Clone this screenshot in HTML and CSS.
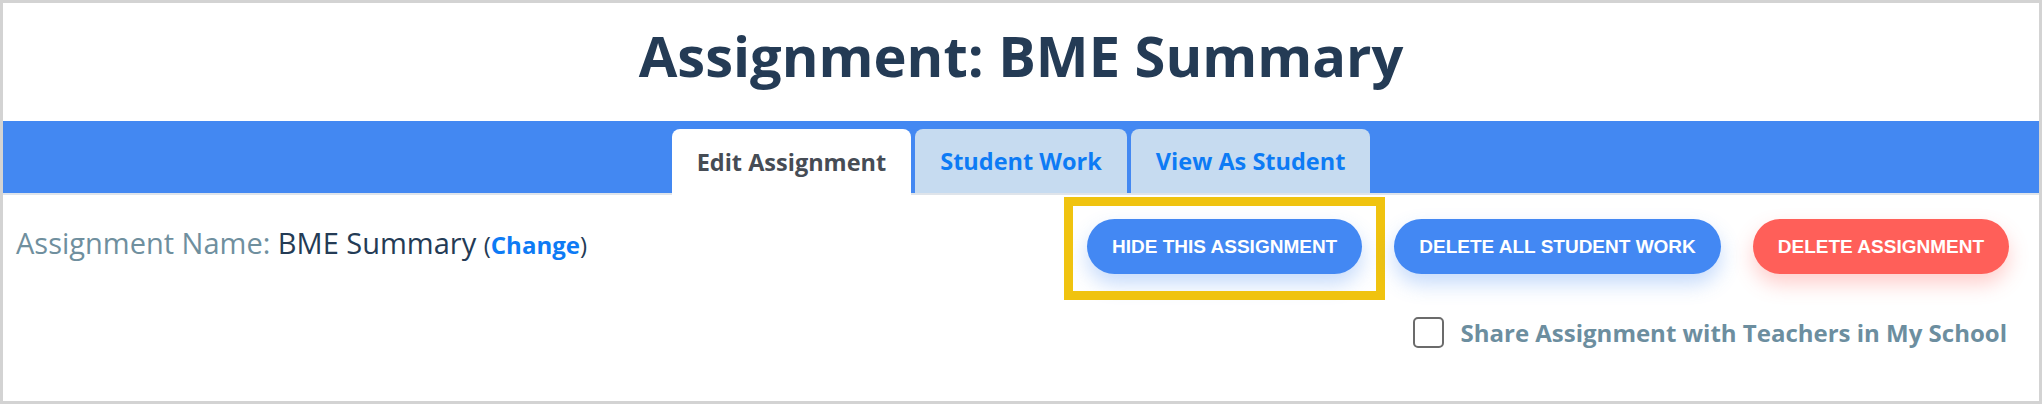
FILE: index.html
```html
<!DOCTYPE html>
<html lang="en">
<head>
    <meta charset="UTF-8">
    <meta name="viewport" content="width=device-width, initial-scale=1.0">
    <title>Assignment: BME Summary</title>
    <link rel="stylesheet" href="styles.css">
</head>
<body>
    <div class="page">
        <header class="page-header">
            <h1>Assignment: BME Summary</h1>
        </header>

        <nav class="tabs">
            <a class="tab active" href="#">Edit Assignment</a>
            <a class="tab" href="#">Student Work</a>
            <a class="tab" href="#">View As Student</a>
        </nav>

        <main class="content">
            <div class="top-row">
                <div class="assignment-name">
                    <span class="label">Assignment Name:</span> BME Summary
                    <span class="change">(<a href="#">Change</a>)</span>
                </div>
                <div class="actions">
                    <button class="btn btn-blue highlighted">Hide This Assignment</button>
                    <button class="btn btn-blue">Delete All Student Work</button>
                    <button class="btn btn-red">Delete Assignment</button>
                </div>
            </div>

            <label class="share">
                <input type="checkbox" id="share">
                <span class="box"></span>
                Share Assignment with Teachers in My School
            </label>
        </main>
    </div>
</body>
</html>
```

FILE: styles.css
```css
body {
    margin: 0;
    font-family: "Open Sans", Arial, sans-serif;
}
.page {
    height: 404px;
    box-sizing: border-box;
    border: 3px solid #d3d3d3;
    background-color: white;
}
.page-header {
    padding: 24px 0 38px;
    text-align: center;
}
h1 {
    margin: 0;
    font-size: 56px;
    line-height: 56px;
    font-weight: 700;
    color: #243b55;
}
.tabs {
    display: flex;
    justify-content: center;
    gap: 4px;
    height: 74px;
    box-sizing: border-box;
    padding-top: 8px;
    background-color: #4388f2;
    border-bottom: 2px solid #dfe4ea;
}
.tab {
    display: flex;
    align-items: center;
    padding: 0 25px;
    border-radius: 8px 8px 0 0;
    background-color: #c6dbf0;
    color: #0d7bf5;
    font-size: 23.5px;
    font-weight: 700;
    text-decoration: none;
}
.tab.active {
    background-color: white;
    color: #464c55;
    margin-bottom: -2px;
}
.content {
    padding: 24px 30px 0 13px;
}
.top-row {
    display: flex;
    justify-content: space-between;
    align-items: center;
}
.assignment-name {
    margin-bottom: 8px;
    font-size: 29px;
    color: #243b55;
}
.assignment-name .label {
    color: #6f8f9e;
}
.change {
    font-size: 24px;
}
.change a {
    color: #0d7bf5;
    font-weight: 700;
    text-decoration: none;
}
.actions {
    display: flex;
    gap: 32px;
}
.btn {
    position: relative;
    height: 55px;
    padding: 0 25px;
    border: none;
    border-radius: 28px;
    color: white;
    font-family: "Liberation Sans", Arial, sans-serif;
    font-size: 19px;
    font-weight: 700;
    text-transform: uppercase;
    cursor: pointer;
}
.btn-blue {
    background-color: #4388f3;
    box-shadow: 0 10px 20px rgba(67, 136, 243, 0.3);
}
.btn-red {
    background-color: #ff5f59;
    box-shadow: 0 10px 20px rgba(255, 95, 89, 0.3);
}
.highlighted::after {
    content: "";
    position: absolute;
    top: -22px;
    left: -23px;
    right: -23px;
    bottom: -26px;
    border: 9px solid #f0c30f;
}
.share {
    display: flex;
    justify-content: flex-end;
    align-items: center;
    gap: 17px;
    margin: 42px 2px 0 0;
    font-size: 24px;
    font-weight: 700;
    color: #6c8e9f;
}
.share input {
    display: none;
}
.box {
    width: 31px;
    height: 31px;
    box-sizing: border-box;
    border: 2px solid #6b6b6b;
    border-radius: 5px;
}
```
